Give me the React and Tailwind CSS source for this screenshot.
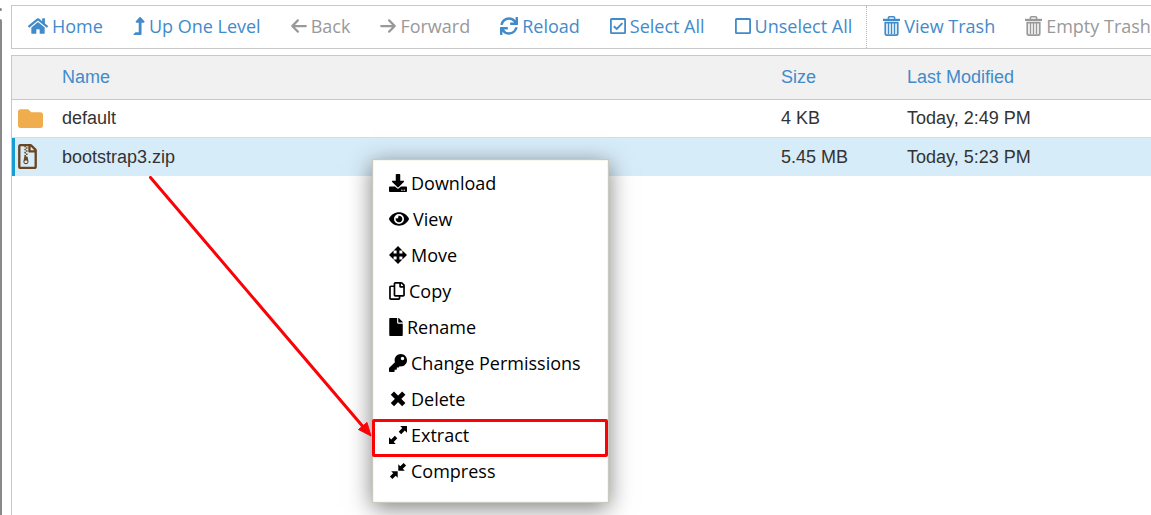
import React from 'react';
import {
  FaHome, FaLevelUpAlt, FaSync, FaFolder, FaRegFileArchive, FaDownload, FaEye,
  FaRegCopy, FaFile, FaKey,
} from 'react-icons/fa';
import { FaArrowLeft, FaArrowRight } from 'react-icons/fa6';

function CheckedBox({ className }) {
  return (
    <svg viewBox="0 0 16 18" className={className} fill="none" stroke="currentColor" aria-hidden="true">
      <rect x="0.9" y="2" width="14.2" height="14.2" rx="0.6" strokeWidth="1.8" />
      <path d="M3.8 9.2 6.8 12 12.4 6.2" strokeWidth="1.9" />
    </svg>
  );
}

function EmptyBox({ className }) {
  return (
    <svg viewBox="0 0 16 18" className={className} fill="none" stroke="currentColor" aria-hidden="true">
      <rect x="0.9" y="2" width="14.2" height="14.2" rx="0.6" strokeWidth="1.8" />
    </svg>
  );
}

function TrashCan({ className }) {
  return (
    <svg viewBox="0 0 17 20" className={className} fill="none" stroke="currentColor" aria-hidden="true">
      <path d="M0 3.9h17" strokeWidth="2.2" />
      <path d="M5.4 3.6V1.8q0-1 1-1h4.2q1 0 1 1v1.8" strokeWidth="1.6" />
      <path d="M2.3 6.6V17.5q0 1.6 1.6 1.6h9.2q1.6 0 1.6-1.6V6.6Z" strokeWidth="1.8" />
      <path d="M5.5 7v11M8.5 7v11M11.5 7v11" strokeWidth="1.5" />
    </svg>
  );
}

function MoveIcon({ className }) {
  return (
    <svg viewBox="0 0 18 18" className={className} fill="currentColor" aria-hidden="true">
      <path d="M9 0l4.4 4.6h-3v3h3v-3L18 9l-4.6 4.4v-3h-3v3h3L9 18l-4.4-4.6h3v-3h-3v3L0 9l4.6-4.4v3h3v-3h-3Z" />
    </svg>
  );
}

function DeleteIcon({ className }) {
  return (
    <svg viewBox="0 0 18 18" className={className} fill="none" stroke="currentColor" aria-hidden="true">
      <path d="M3.4 3.2 14.8 14.6M14.8 3.2 3.4 14.6" strokeWidth="4.6" />
    </svg>
  );
}

function ExtractIcon({ className }) {
  return (
    <svg viewBox="0 0 18 18" className={className} fill="currentColor" aria-hidden="true">
      <path d="M11.2 0H18v6.8l-2.2-2.2-3.6 3.6-2.5-2.5 3.6-3.6Z" />
      <path d="M6.8 18H0v-6.8l2.2 2.2 3.6-3.6 2.5 2.5-3.6 3.6Z" />
    </svg>
  );
}

function CompressIcon({ className }) {
  return (
    <svg viewBox="0 0 18 18" className={className} fill="currentColor" aria-hidden="true">
      <path d="M9.3 8.7V2.2l2 2L14.6.9 17.1 3.4 13.8 6.7l2 2Z" />
      <path d="M8.7 9.3v6.5l-2-2-3.3 3.3L.9 14.6l3.3-3.3-2-2Z" />
    </svg>
  );
}

const tools = [
  { label: 'Home', Icon: FaHome, size: 'w-5 h-[18px]' },
  { label: 'Up One Level', Icon: FaLevelUpAlt, size: 'w-3 h-[18px]' },
  { label: 'Back', Icon: FaArrowLeft, size: 'w-4 h-[18px]', disabled: true },
  { label: 'Forward', Icon: FaArrowRight, size: 'w-4 h-[18px]', disabled: true },
  { label: 'Reload', Icon: FaSync, size: 'w-[18px] h-[18px]' },
  { label: 'Select All', Icon: CheckedBox, size: 'w-4 h-[18px]' },
  { label: 'Unselect All', Icon: EmptyBox, size: 'w-4 h-[18px]', divider: true },
  { label: 'View Trash', Icon: TrashCan, size: 'w-[17px] h-5' },
  { label: 'Empty Trash', Icon: TrashCan, size: 'w-[17px] h-5', disabled: true },
];

const files = [
  { name: 'default', size: '4 KB', modified: 'Today, 2:49 PM', folder: true },
  { name: 'bootstrap3.zip', size: '5.45 MB', modified: 'Today, 5:23 PM', selected: true },
];

const actions = [
  { label: 'Download', Icon: FaDownload, size: 'w-[18px] h-[18px]' },
  { label: 'View', Icon: FaEye, size: 'w-5 h-[18px]' },
  { label: 'Move', Icon: MoveIcon, size: 'w-[18px] h-[18px]' },
  { label: 'Copy', Icon: FaRegCopy, size: 'w-4 h-[18px]' },
  { label: 'Rename', Icon: FaFile, size: 'w-[14px] h-[18px]' },
  { label: 'Change Permissions', Icon: FaKey, size: 'w-[18px] h-[18px]' },
  { label: 'Delete', Icon: DeleteIcon, size: 'w-[18px] h-[18px]' },
  { label: 'Extract', Icon: ExtractIcon, size: 'w-[18px] h-[18px]', highlighted: true },
  { label: 'Compress', Icon: CompressIcon, size: 'w-[18px] h-[18px]' },
];

function Toolbar() {
  return (
    <div role="toolbar" aria-label="File actions" className="flex h-11 overflow-hidden border-y border-l border-[#c8c8c8] font-['Open_Sans',sans-serif]">
      {tools.map(({ label, Icon, size, disabled, divider }) => (
        <button
          key={label}
          type="button"
          disabled={disabled}
          className={`flex shrink-0 items-center gap-1 pr-[14px] pb-[2px] pl-4 text-lg whitespace-nowrap ${disabled ? 'text-[#999999]' : 'text-[#428bca]'} ${divider ? 'border-r border-dotted border-[#b5b5b5]' : ''}`}
        >
          <Icon className={`shrink-0 ${size}`} />
          {label}
        </button>
      ))}
    </div>
  );
}

function FileTable() {
  return (
    <table className="w-full table-fixed border-collapse text-left text-lg leading-6 text-[#333333]">
      <colgroup>
        <col className="w-[50px]" />
        <col />
        <col className="w-[126px]" />
        <col className="w-[244px]" />
      </colgroup>
      <thead>
        <tr className="h-[43px] border-b border-[#c8c8c8] bg-[#f1f1f1] text-[#428bca]">
          <th aria-label="Type" />
          <th className="font-normal">Name</th>
          <th className="font-normal">Size</th>
          <th className="font-normal">Last Modified</th>
        </tr>
      </thead>
      <tbody>
        {files.map((f) => (
          <tr key={f.name} className={f.selected ? 'h-[39px] bg-[#d7ecf9]' : 'h-[38px] border-b border-[#d5dde2]'}>
            <td className={f.selected ? 'pl-[6px] shadow-[inset_3px_0_0_#179bd3]' : 'pl-[6px]'}>
              {f.folder
                ? <FaFolder className="size-[25px] text-[#f0ad4e]" />
                : <FaRegFileArchive className="h-[25px] w-[19px] text-[#6b4420]" />}
            </td>
            <td>{f.name}</td>
            <td>{f.size}</td>
            <td>{f.modified}</td>
          </tr>
        ))}
      </tbody>
    </table>
  );
}

function ContextMenu() {
  return (
    <ul
      role="menu"
      className="absolute top-[159px] left-[372px] w-[237px] border border-[#c9c9bd] bg-white pt-[5px] pb-[13px] font-['Open_Sans',sans-serif] shadow-[0_5px_22px_rgba(0,0,0,0.5),inset_0_0_0_1px_#f6f5ee]"
    >
      {actions.map(({ label, Icon, size, highlighted }) => (
        <li key={label} role="none" className={highlighted ? 'relative' : ''}>
          <button type="button" role="menuitem" className="flex h-9 w-full items-center gap-1 px-4 text-lg whitespace-nowrap text-black">
            <Icon className={`shrink-0 ${size}`} />
            {label}
          </button>
          {highlighted && (
            <span className="pointer-events-none absolute top-[2px] right-0 -bottom-1 -left-px rounded-xs border-3 border-[#fb0207]" />
          )}
        </li>
      ))}
    </ul>
  );
}

export default function App() {
  return (
    <div className="relative flex min-h-screen overflow-hidden bg-white font-['Liberation_Sans',Arial,sans-serif]">
      <div className="flex w-[2px] shrink-0 flex-col gap-2 pt-2">
        <div className="h-[3px] rounded-r-full bg-[#888888]" />
        <div className="grow rounded-tr-full bg-[#888888]" />
      </div>
      <main className="flex min-w-0 grow flex-col gap-[6px] pt-[5px] pl-[9px]">
        <Toolbar />
        <section className="grow border-t border-l border-[#c8c8c8]">
          <FileTable />
        </section>
      </main>
      <ContextMenu />
      <svg viewBox="0 0 224 262" className="pointer-events-none absolute top-[176px] left-[149px] h-[262px] w-[224px]" aria-hidden="true">
        <path d="M1.5 1.5 216 253" stroke="#fb0207" strokeWidth="3" strokeLinecap="round" />
        <path d="M222 260 209.5 253.5 218 246.5Z" fill="#fb0207" stroke="#fb0207" strokeWidth="1" />
      </svg>
    </div>
  );
}
